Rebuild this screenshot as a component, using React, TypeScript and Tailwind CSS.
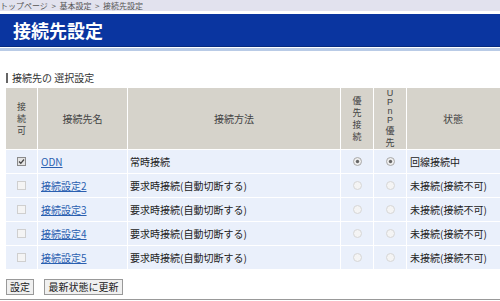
import React from "react";

const font = { fontFamily: '"Noto Sans CJK JP", "Noto Sans", sans-serif' };
const latin = { fontFamily: '"Liberation Sans", "Noto Sans CJK JP", sans-serif' };

function Check({ checked }: { checked?: boolean }) {
  return (
    <svg width="9" height="9" viewBox="0 0 9 9">
      <rect x="0.5" y="0.5" width="8" height="8" fill={checked ? "#e4e4e4" : "#f4f4f4"} stroke={checked ? "#8a8a8a" : "#cfcfcf"} />
      {checked && <path d="M2 4.5 L3.8 6.3 L7 2.5" fill="none" stroke="#444" strokeWidth="1.3" />}
    </svg>
  );
}

function Radio({ checked }: { checked?: boolean }) {
  return (
    <svg width="9" height="9" viewBox="0 0 9 9">
      <circle cx="4.5" cy="4.5" r="4" fill={checked ? "#eeeeee" : "#f4f4f4"} stroke={checked ? "#a8a8a8" : "#d6d6d6"} />
      {checked && <circle cx="4.5" cy="4.5" r="1.7" fill="#666" />}
    </svg>
  );
}

const rows = [
  { checked: true, name: "ODN", method: "常時接続", on: true, status: "回線接続中" },
  { checked: false, name: "接続設定2", method: "要求時接続(自動切断する)", on: false, status: "未接続(接続不可)" },
  { checked: false, name: "接続設定3", method: "要求時接続(自動切断する)", on: false, status: "未接続(接続不可)" },
  { checked: false, name: "接続設定4", method: "要求時接続(自動切断する)", on: false, status: "未接続(接続不可)" },
  { checked: false, name: "接続設定5", method: "要求時接続(自動切断する)", on: false, status: "未接続(接続不可)" },
];

export default function App() {
  return (
    <div className="w-[500px] h-[301px] overflow-hidden bg-white text-[#333]" style={font}>
      <div className="h-[11px] bg-[#e2e2ee] text-[8px] leading-[11px] text-[#555] whitespace-nowrap">
        トップページ&nbsp;&nbsp;&gt;&nbsp;&nbsp;基本設定&nbsp;&nbsp;&gt;&nbsp;&nbsp;接続先設定
      </div>
      <div className="mt-[3px] h-[33px] bg-[#0a35a0] border-b border-[#062a80] flex items-center pl-[13px] text-white font-bold text-[18px]">
        接続先設定
      </div>
      <div className="mt-[1px] h-[3px] bg-[#b9cbe6]" />
      <div className="mt-[22px] ml-[6px] flex items-center h-[10px]">
        <div className="w-[2px] h-[10px] bg-[#666]" />
        <span className="ml-[4px] text-[10px] leading-[10px] text-[#333]">接続先の 選択設定</span>
      </div>
      <table className="mt-[4px] ml-[5px] border-separate border-spacing-[1px] text-[10px] table-fixed w-[560px]">
        <colgroup>
          <col className="w-[31px]" />
          <col className="w-[89px]" />
          <col className="w-[212px]" />
          <col className="w-[32px]" />
          <col className="w-[32px]" />
          <col className="w-[157px]" />
        </colgroup>
        <thead>
          <tr className="h-[61px] bg-[#d6d3cb] text-[#444]">
            <th className="font-normal p-0">
              <div className="flex flex-col items-center text-[9px] leading-[12px]">
                <span>接</span><span>続</span><span>可</span>
              </div>
            </th>
            <th className="font-normal p-0">接続先名</th>
            <th className="font-normal p-0">接続方法</th>
            <th className="font-normal p-0">
              <div className="flex flex-col items-center text-[9px] leading-[12px]">
                <span>優</span><span>先</span><span>接</span><span>続</span>
              </div>
            </th>
            <th className="font-normal p-0">
              <div className="flex flex-col items-center text-[9px] leading-[9px]">
                <span style={latin}>U</span>
                <span style={latin}>P</span>
                <span style={latin}>n</span>
                <span style={latin}>P</span>
                <span className="leading-[12px]">優</span>
                <span className="leading-[12px]">先</span>
              </div>
            </th>
            <th className="font-normal p-0 text-left pl-[36px]">状態</th>
          </tr>
        </thead>
        <tbody>
          {rows.map((r, i) => (
            <tr key={i} className="h-[23px] bg-[#eaf0fb]">
              <td className="p-0 text-center"><div className="flex justify-center"><Check checked={r.checked} /></div></td>
              <td className="p-0 pl-[3px]"><span className="text-[#2a5fb0] underline">{r.name}</span></td>
              <td className="p-0 pl-[2px] text-[#222]">{r.method}</td>
              <td className="p-0"><div className="flex justify-center"><Radio checked={r.on} /></div></td>
              <td className="p-0"><div className="flex justify-center"><Radio checked={r.on} /></div></td>
              <td className="p-0 pl-[3px] text-[#222]">{r.status}</td>
            </tr>
          ))}
        </tbody>
      </table>
      <div className="mt-[9px] ml-[6px] flex gap-[10px]">
        <button className="h-[16px] w-[28px] border border-[#999] bg-[#f0f0f0] text-[10px] leading-[14px] text-[#222]">設定</button>
        <button className="h-[16px] w-[79px] border border-[#999] bg-[#f0f0f0] text-[10px] leading-[14px] text-[#222]">最新状態に更新</button>
      </div>
      <div className="mt-[4px] h-[1px] bg-[#999]" />
    </div>
  );
}
